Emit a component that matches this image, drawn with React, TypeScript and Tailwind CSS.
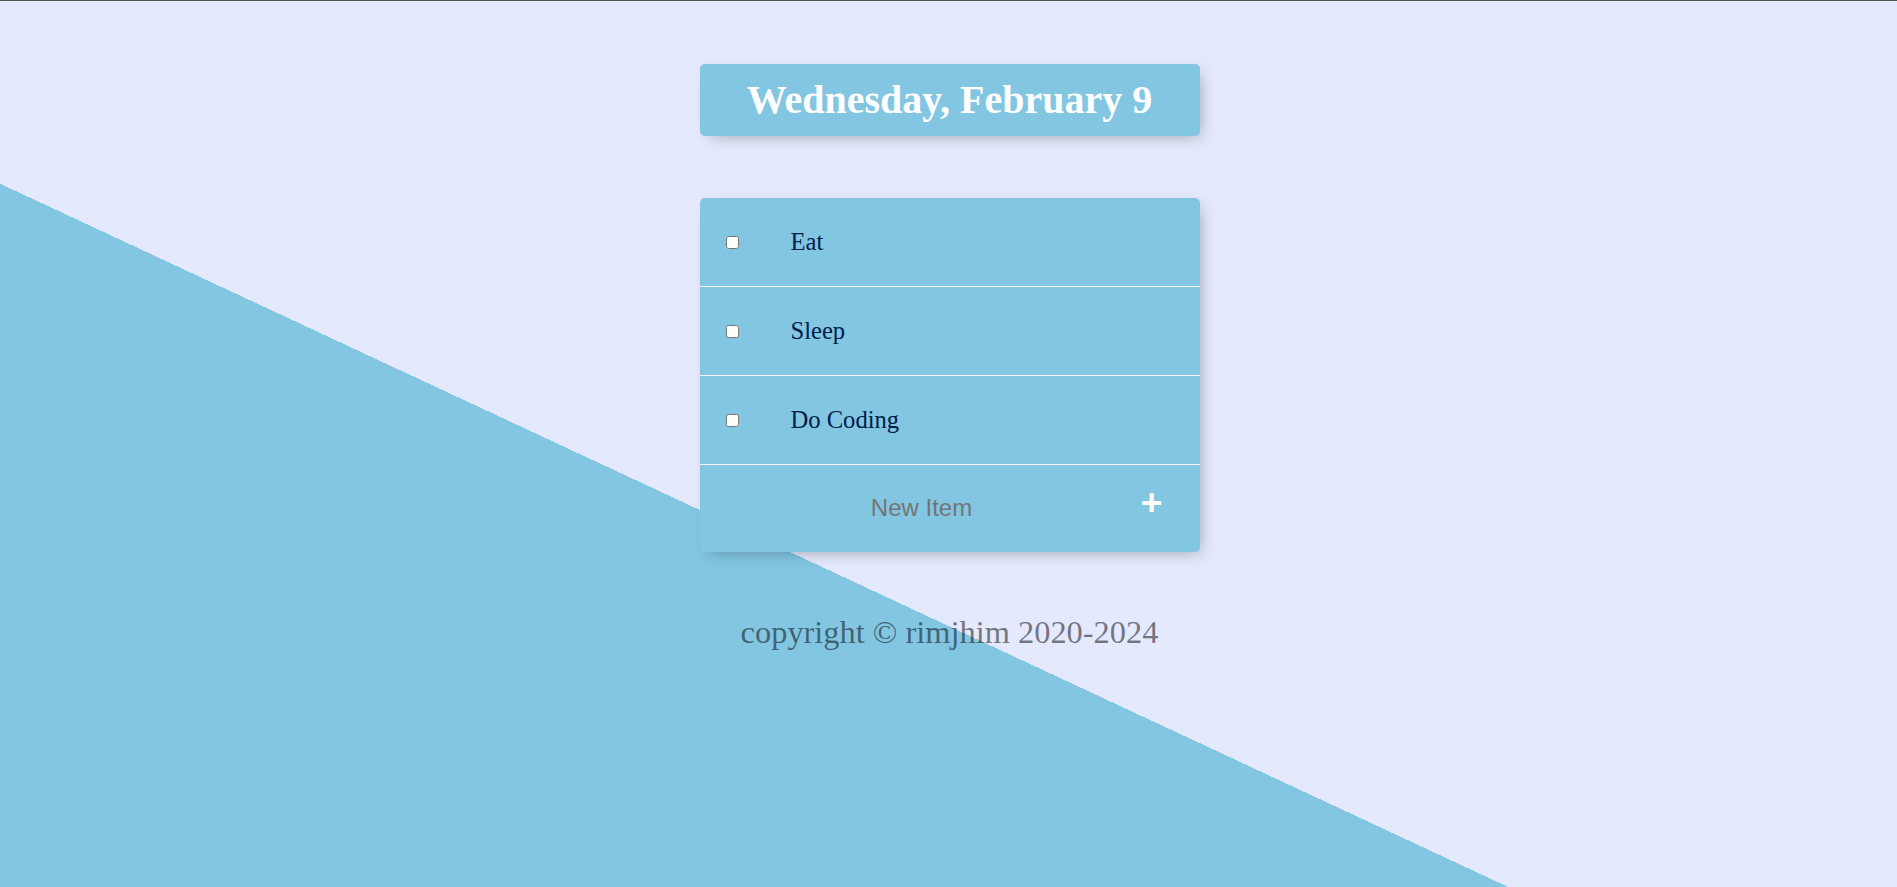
import { useState } from "react";

const ITEMS = ["Eat", "Sleep", "Do Coding"];

const serif = "font-['Liberation_Serif','Times_New_Roman',serif]";
const sans = "font-['Liberation_Sans',Arial,sans-serif]";

export default function App() {
  const [items, setItems] = useState(ITEMS);
  const [draft, setDraft] = useState("");

  return (
    <div className="relative h-[887px] w-full overflow-hidden bg-[linear-gradient(25deg,#82c6e2_39.7%,#e4e9fd_39.7%)]">
      {/* browser chrome line */}
      <div className="h-px w-full bg-[#555555]" />

      <div className="pl-[2px]">
        {/* Heading */}
        <div className="mx-auto mt-[63px] flex h-[72px] w-[500px] items-center justify-center rounded-[5px] bg-[#82c6e2] shadow-[5px_5px_15px_-5px_rgba(0,0,0,0.3)]">
          <h1 className={`${serif} text-[40px] font-bold leading-[46px] text-white`}>Wednesday, February 9</h1>
        </div>

        {/* List */}
        <div className="mx-auto mt-[62px] w-[500px] overflow-hidden rounded-[5px] bg-[#82c6e2] shadow-[5px_5px_15px_-5px_rgba(0,0,0,0.3)]">
          {items.map((item) => (
            <div key={item} className="flex h-[89px] items-center border-b border-[#f1f1f1]">
              <input type="checkbox" className="ml-[26px] h-[13px] w-[13px]" />
              <p className={`${serif} ml-[52px] text-[24.6px] leading-[28px] text-[#00204a]`}>{item}</p>
            </div>
          ))}

          <form
            className="flex h-[87px] items-center"
            onSubmit={(e) => {
              e.preventDefault();
              if (draft.trim()) setItems((prev) => [...prev, draft.trim()]);
              setDraft("");
            }}
          >
            <input
              type="text"
              value={draft}
              onChange={(e) => setDraft(e.target.value)}
              placeholder="New Item"
              autoComplete="off"
              className={`${sans} ml-[20px] mb-[1px] w-[404px] bg-transparent text-center text-[24px] text-[#00204a] outline-none placeholder:text-[#757575]`}
            />
            <button
              type="submit"
              className={`${sans} ml-[3px] mb-[12px] flex h-[50px] w-[50px] items-center justify-center rounded-full bg-[#82c6e2] text-[37px] font-bold leading-none text-white`}
            >
              +
            </button>
          </form>
        </div>

        {/* Footer */}
        <footer className={`${serif} mt-[62px] text-center text-[32.4px] leading-[37px] text-black/50`}>
          copyright © rimjhim 2020-2024
        </footer>
      </div>
    </div>
  );
}
